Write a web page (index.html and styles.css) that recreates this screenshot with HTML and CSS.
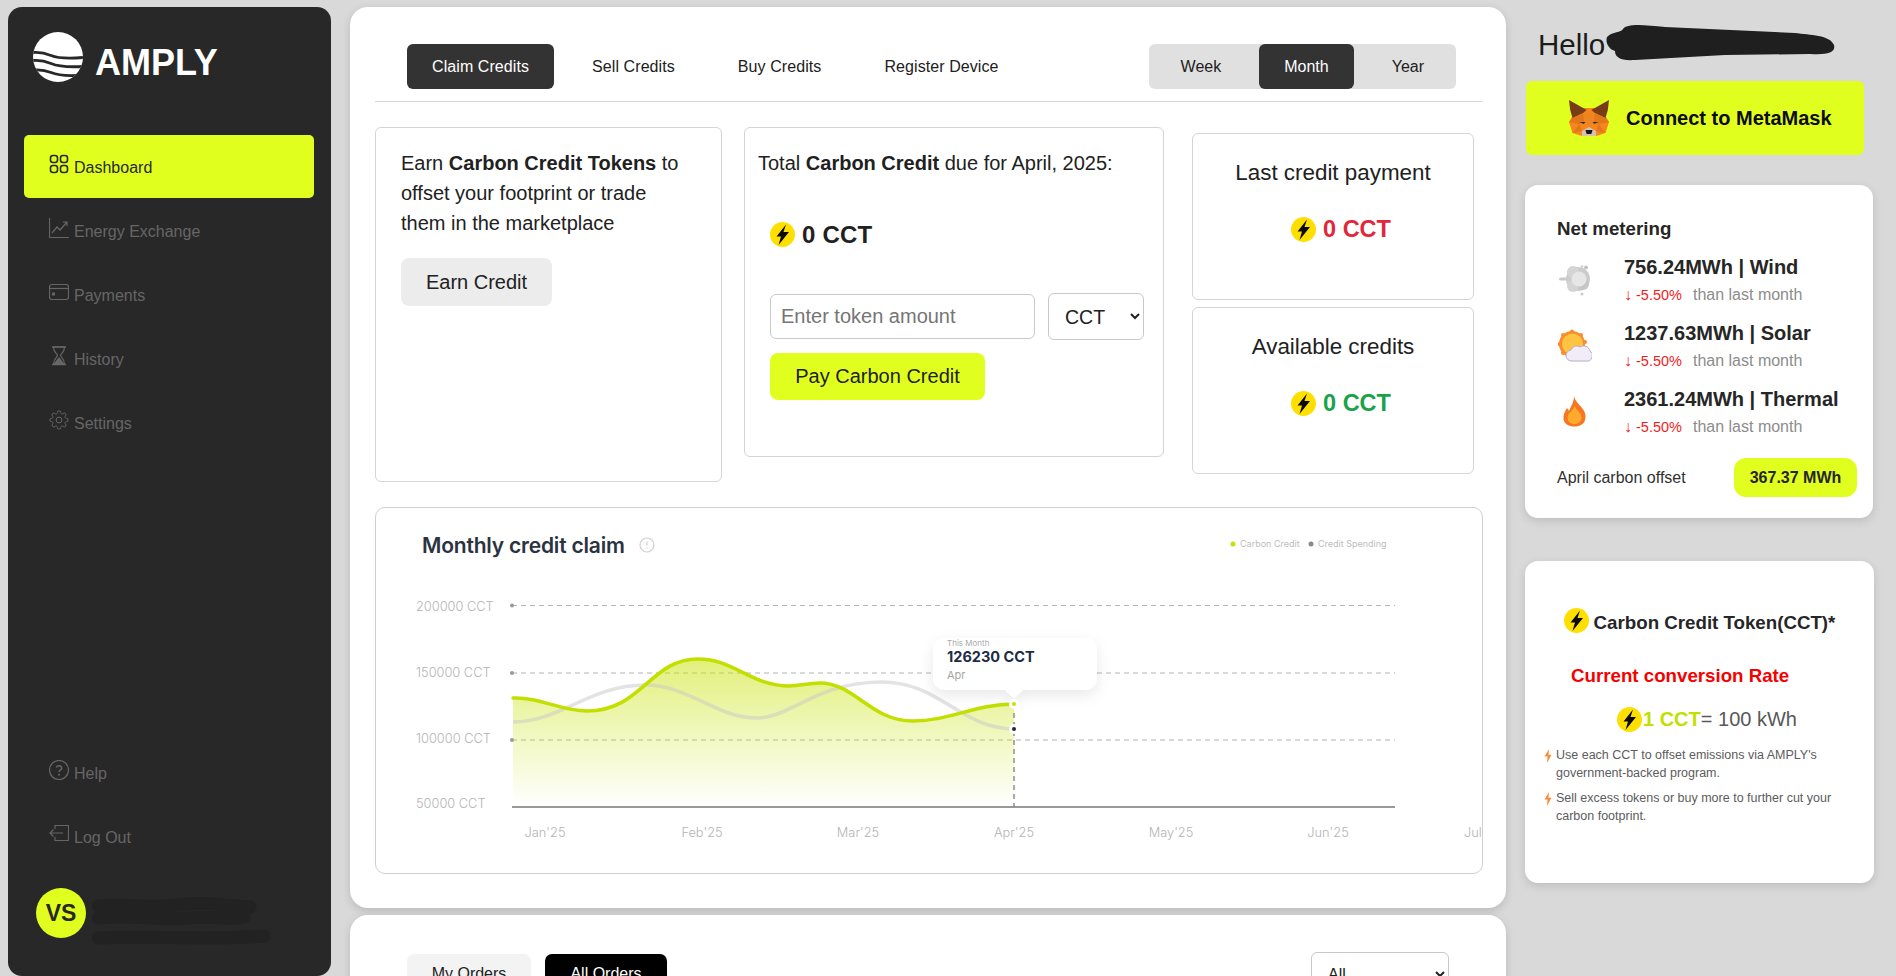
FILE: index.html
```html
<!DOCTYPE html>
<html lang="en">
<head>
<meta charset="utf-8">
<title>AMPLY Dashboard</title>
<link rel="stylesheet" href="styles.css">
</head>
<body>
<svg class="defs" width="0" height="0" aria-hidden="true">
  <symbol id="coin" viewBox="0 0 25 25">
    <circle cx="12.5" cy="12.5" r="12.5" fill="#ffdf00"/>
    <polygon points="16,2.5 6.5,14.5 11,14.5 8.500,23 19,10 13.500,10" fill="#0a0a0a"/>
  </symbol>
  <symbol id="bolt" viewBox="0 0 8 14">
    <polygon points="5,0 0.5,7.5 3.5,7.5 3,14 7.5,5.8 4.5,5.8" fill="#fb8b3c"/>
  </symbol>
</svg>
<div class="page">
  <aside class="sidebar">
    <div class="brand">
      <svg class="brand-logo" viewBox="0 0 50 50">
        <defs><clipPath id="logo-clip"><circle cx="25" cy="25" r="25"/></clipPath></defs>
        <circle cx="25" cy="25" r="25" fill="#fff"/>
        <g clip-path="url(#logo-clip)" fill="none" stroke="#282828" stroke-width="2.8">
          <path d="M0 20.5C6 20 12 21 18 23.5S32 27 50 25.5"/>
          <path d="M0 28.5C6 28 12 29 18 31.5S32 35.5 50 34.5"/>
          <path d="M0 38C6 37.5 12 38 18 40.5S32 44.5 50 43"/>
        </g>
      </svg>
      <span class="brand-name">AMPLY</span>
    </div>
    <nav class="nav">
      <a class="nav-item nav-active">
        <svg class="nav-icon" viewBox="0 0 20 20"><rect x="1.5" y="1.5" width="7" height="7" rx="2.5"/><rect x="11.5" y="1.5" width="7" height="7" rx="2.5"/><rect x="1.5" y="11.5" width="7" height="7" rx="2.5"/><rect x="11.5" y="11.5" width="7" height="7" rx="2.5"/></svg>
        <span class="nav-label">Dashboard</span>
      </a>
      <a class="nav-item">
        <svg class="nav-icon" viewBox="0 0 20 20"><path d="M.5 0V19.5H20"/><path d="M3 15L8 9l3 3 7-8M14 4h4v4"/></svg>
        <span class="nav-label">Energy Exchange</span>
      </a>
      <a class="nav-item">
        <svg class="nav-icon" viewBox="0 0 20 20"><rect x=".5" y="2.5" width="19" height="15" rx="2.5"/><path d="M.5 6.5h19"/><rect x="3" y="10.5" width="3" height="3" fill="#666" stroke="none"/></svg>
        <span class="nav-label">Payments</span>
      </a>
      <a class="nav-item">
        <svg class="nav-icon" viewBox="0 0 20 20"><path d="M3 1h14M3 18.500h14" stroke-width="1.6"/><path d="M4.500 1c0 6 4 6.500 4 8.500s-4 2.500-4 9h11c0-6.500-4-7-4-9s4-2.500 4-8.500z" stroke-width="1.2"/><path d="M4.500 18h11l-5.500-7z" fill="#666" stroke="none"/></svg>
        <span class="nav-label">History</span>
      </a>
      <a class="nav-item">
        <svg class="nav-icon" viewBox="0 0 24 24"><circle cx="12" cy="12" r="3.500"/><path d="M19.400 15a1.650 1.650 0 0 0 .33 1.820l.06.06a2 2 0 0 1 0 2.830 2 2 0 0 1-2.830 0l-.06-.06a1.650 1.650 0 0 0-1.820-.33 1.650 1.650 0 0 0-1 1.510V21a2 2 0 0 1-2 2 2 2 0 0 1-2-2v-.09A1.650 1.650 0 0 0 9 19.400a1.650 1.650 0 0 0-1.820.33l-.06.06a2 2 0 0 1-2.830 0 2 2 0 0 1 0-2.830l.06-.06a1.650 1.650 0 0 0 .33-1.820 1.650 1.650 0 0 0-1.510-1H3a2 2 0 0 1-2-2 2 2 0 0 1 2-2h.09A1.650 1.650 0 0 0 4.600 9a1.650 1.650 0 0 0-.33-1.820l-.06-.06a2 2 0 0 1 0-2.830 2 2 0 0 1 2.830 0l.06.06a1.650 1.650 0 0 0 1.820.33H9a1.650 1.650 0 0 0 1-1.510V3a2 2 0 0 1 2-2 2 2 0 0 1 2 2v.09a1.650 1.650 0 0 0 1 1.510 1.650 1.650 0 0 0 1.820-.33l.06-.06a2 2 0 0 1 2.830 0 2 2 0 0 1 0 2.830l-.06.06a1.650 1.650 0 0 0-.33 1.820V9a1.650 1.650 0 0 0 1.510 1H21a2 2 0 0 1 2 2 2 2 0 0 1-2 2h-.09a1.650 1.650 0 0 0-1.510 1z"/></svg>
        <span class="nav-label">Settings</span>
      </a>
    </nav>
    <nav class="nav nav-bottom">
      <a class="nav-item">
        <svg class="nav-icon" viewBox="0 0 20 20"><circle cx="10" cy="10" r="9.500"/><path d="M7.300 7.500a2.800 2.800 0 0 1 5.400.8c0 1.800-2.700 2-2.700 3.700" stroke-width="1.500"/><circle cx="10" cy="14.800" r="1" fill="#666" stroke="none"/></svg>
        <span class="nav-label">Help</span>
      </a>
      <a class="nav-item">
        <svg class="nav-icon" viewBox="0 0 20 20"><path d="M6 5V1.500h13.500v15H6V13"/><path d="M14 9H1M4.500 5.500L1 9l3.500 3.500"/></svg>
        <span class="nav-label">Log Out</span>
      </a>
    </nav>
    <div class="user">
      <div class="avatar">VS</div>
      <svg class="user-scribble" viewBox="0 0 190 50"><path d="M6 10c30 -3 50 3 80 -1s50 1 72 2M6 22c40 -4 60 3 90 0s35 3 56 -1"/><path d="M6 42c50 -3 110 3 166 -2"/></svg>
    </div>
  </aside>

  <main class="main">
    <section class="panel panel-claim">
      <header class="tabbar">
        <div class="tabs tabs-main">
          <button class="tab tab-active">Claim Credits</button>
          <button class="tab">Sell Credits</button>
          <button class="tab">Buy Credits</button>
          <button class="tab">Register Device</button>
        </div>
        <div class="tabs range">
          <button class="tab">Week</button>
          <button class="tab tab-active">Month</button>
          <button class="tab">Year</button>
        </div>
      </header>

      <div class="cards">
        <div class="box box-earn">
          <p class="lead">Earn <b>Carbon Credit Tokens</b> to offset your footprint or trade them in the marketplace</p>
          <button class="btn btn-grey">Earn Credit</button>
        </div>
        <div class="box box-pay">
          <p class="lead">Total <b>Carbon Credit</b> due for April, 2025:</p>
          <div class="amount amount-pay"><svg class="coin"><use href="#coin"/></svg><span>0 CCT</span></div>
          <div class="pay-form">
            <input class="field" type="text" placeholder="Enter token amount">
            <select class="picker"><option>CCT</option></select>
          </div>
          <button class="btn btn-lime">Pay Carbon Credit</button>
        </div>
        <div class="stack">
          <div class="box box-stat">
            <h4 class="stat-title">Last credit payment</h4>
            <div class="amount amount-stat red"><svg class="coin"><use href="#coin"/></svg><span>0 CCT</span></div>
          </div>
          <div class="box box-stat">
            <h4 class="stat-title">Available credits</h4>
            <div class="amount amount-stat green"><svg class="coin"><use href="#coin"/></svg><span>0 CCT</span></div>
          </div>
        </div>
      </div>

      <div class="chart-card">
        <svg class="chart" viewBox="376 508 1106 365">
          <defs>
            <linearGradient id="area" x1="0" y1="0" x2="0" y2="1">
              <stop offset="0" stop-color="#c6e200" stop-opacity=".52"/>
              <stop offset="1" stop-color="#c6e200" stop-opacity="0"/>
            </linearGradient>
            <filter id="tip-shadow" x="-20%" y="-20%" width="140%" height="160%">
              <feDropShadow dx="0" dy="5" stdDeviation="7" flood-color="#000" flood-opacity=".09"/>
            </filter>
          </defs>
          <text class="c-title" x="422" y="553">Monthly credit claim</text>
          <circle cx="647" cy="545" r="7" class="c-info"/>
          <path d="M647 541.500v4M647 547.500v1" class="c-info-mark"/>

          <circle cx="1233" cy="544" r="2.500" fill="#c6e200"/>
          <text class="c-legend" x="1240" y="547">Carbon Credit</text>
          <circle cx="1311" cy="544" r="2.500" fill="#8a8a8a"/>
          <text class="c-legend" x="1318" y="547">Credit Spending</text>

          <path class="c-grid" d="M512 605.500H1395M512 673H1395M512 740H1395"/>
          <circle cx="512" cy="605.500" r="2" fill="#999"/>
          <circle cx="512" cy="673" r="2" fill="#999"/>
          <circle cx="512" cy="740" r="2" fill="#999"/>

          <text class="c-axis" x="416" y="610.500">200000 CCT</text>
          <text class="c-axis" x="416" y="676.500">150000 CCT</text>
          <text class="c-axis" x="416" y="742.500">100000 CCT</text>
          <text class="c-axis" x="416" y="808">50000 CCT</text>

          <path fill="url(#area)" d="M513 698C540 697 560 711 587 711C642 711 650 659 698 659C735 659 750 686 790 686C800 686 808 683 820 683C855 683 870 721 913 721C950 721 975 704 1014 704L1014 807L513 807Z"/>
          <path class="c-line-grey" d="M513 722C560 722 590 685 645 685C690 685 715 718 757 718C790 718 815 683 880 682C940 681 960 729 1014 729"/>
          <path class="c-line-lime" d="M513 698C540 697 560 711 587 711C642 711 650 659 698 659C735 659 750 686 790 686C800 686 808 683 820 683C855 683 870 721 913 721C950 721 975 704 1014 704"/>
          <path class="c-drop" d="M1014 704V807"/>
          <path class="c-base" d="M512 807H1395"/>

          <text class="c-axis c-mid" x="545" y="837">Jan'25</text>
          <text class="c-axis c-mid" x="702" y="837">Feb'25</text>
          <text class="c-axis c-mid" x="858" y="837">Mar'25</text>
          <text class="c-axis c-mid" x="1014" y="837">Apr'25</text>
          <text class="c-axis c-mid" x="1171" y="837">May'25</text>
          <text class="c-axis c-mid" x="1328" y="837">Jun'25</text>
          <text class="c-axis" x="1464" y="837">Jul'25</text>

          <path filter="url(#tip-shadow)" fill="#fff" d="M945 638H1085a12 12 0 0 1 12 12V678a12 12 0 0 1-12 12H1023L1014 698L1005 690H945a12 12 0 0 1-12-12V650a12 12 0 0 1 12-12z"/>
          <text class="c-tip-small" x="947" y="646">This Month</text>
          <text class="c-tip-value" x="947" y="662">126230 CCT</text>
          <text class="c-tip-sub" x="947" y="679">Apr</text>

          <circle cx="1014" cy="704" r="5" fill="#fff"/>
          <circle cx="1014" cy="704" r="2" fill="#c6e200"/>
          <circle cx="1014" cy="729" r="5" fill="#fff"/>
          <circle cx="1014" cy="729" r="2" fill="#1f2937"/>
        </svg>
      </div>
    </section>

    <section class="panel panel-orders">
      <div class="orders-bar">
        <div class="order-tabs">
          <button class="order-tab">My Orders</button>
          <button class="order-tab order-tab-active">All Orders</button>
        </div>
        <select class="picker orders-picker"><option>All</option></select>
      </div>
    </section>
  </main>

  <aside class="rail">
    <div class="hello">
      <span>Hello</span>
      <svg class="hello-scribble" viewBox="0 0 230 40"><path d="M2 14C8 8 16 10 18 6C22 0 40 2 60 4L190 10C205 12 225 12 229 22C231 30 222 32 205 31L120 32L30 37C15 38 10 34 10 28C4 26 0 20 2 14Z"/></svg>
    </div>
    <button class="connect">
      <svg class="fox" viewBox="0 0 34 37" preserveAspectRatio="none">
        <polygon points="3,16 11,8 23,8 31,16 34,22 31,33 23,36 11,36 3,33 0,22" fill="#f6851b"/>
        <polygon points="0,0 15,10 12,13 3,18 1,10" fill="#763d16"/>
        <polygon points="34,0 19,10 22,13 31,18 33,10" fill="#763d16"/>
        <polygon points="3,18 12,13 13,22 9,24 0,22" fill="#e2761b"/>
        <polygon points="31,18 22,13 21,22 25,24 34,22" fill="#e2761b"/>
        <polygon points="12,13 22,13 20,22 17,27 14,22" fill="#ee8520"/>
        <polygon points="9,22 14,22 12.500,24" fill="#233447"/>
        <polygon points="25,22 20,22 21.500,24" fill="#233447"/>
        <polygon points="3,33 9,24 11,31" fill="#e4761b"/>
        <polygon points="31,33 25,24 23,31" fill="#e4761b"/>
        <polygon points="11,31 17,27 23,31 23,36 11,36" fill="#d7c1b3"/>
        <polygon points="14,30 20,30 19,34 15,34" fill="#161616"/>
      </svg>
      <span>Connect to MetaMask</span>
    </button>

    <section class="side-card net">
      <h3 class="net-title">Net metering</h3>
      <div class="meter">
        <svg class="meter-icon" viewBox="0 0 34 34">
          <rect x="1" y="14.500" width="12" height="3" rx="1.500" fill="#c9c9c9"/>
          <circle cx="20" cy="16" r="12" fill="#cccccc"/>
          <circle cx="15" cy="9" r="6" fill="#d4d4d4"/>
          <circle cx="15" cy="23" r="6" fill="#d4d4d4"/>
          <circle cx="25" cy="21" r="6" fill="#c6c6c6"/>
          <circle cx="21" cy="16" r="7.500" fill="#e6e6e6"/>
          <circle cx="24" cy="3.500" r="1.500" fill="#d6d6d6"/>
          <circle cx="28" cy="4.500" r="2" fill="#c2c2c2"/>
          <circle cx="24" cy="31" r="1.500" fill="#c9c9c9"/>
        </svg>
        <div class="meter-text">
          <div class="meter-value">756.24MWh | Wind</div>
          <div class="meter-sub"><span class="delta"><span class="arrow">↓</span>-5.50%</span><span class="than">than last month</span></div>
        </div>
      </div>
      <div class="meter">
        <svg class="meter-icon" viewBox="0 0 34 34">
          <circle cx="14" cy="15" r="13" fill="#fb8b2b"/>
          <circle cx="14" cy="2.500" r="2" fill="#fb8b2b"/><circle cx="23" cy="6" r="2" fill="#fb8b2b"/><circle cx="5" cy="6" r="2" fill="#fb8b2b"/><circle cx="1.500" cy="15" r="2" fill="#fb8b2b"/><circle cx="5" cy="24" r="2" fill="#fb8b2b"/><circle cx="27" cy="13" r="2" fill="#fb8b2b"/>
          <circle cx="14.500" cy="15" r="10.500" fill="#fcc440"/>
          <path d="M14 32h14a5.500 5.500 0 0 0 4-10 6.500 6.500 0 0 0-10-4 6 6 0 0 0-9 3 5.500 5.500 0 0 0 1 11z" fill="#f1ecf8" stroke="#b5aec9"/>
        </svg>
        <div class="meter-text">
          <div class="meter-value">1237.63MWh | Solar</div>
          <div class="meter-sub"><span class="delta"><span class="arrow">↓</span>-5.50%</span><span class="than">than last month</span></div>
        </div>
      </div>
      <div class="meter">
        <svg class="meter-icon" viewBox="0 0 34 34">
          <path d="M16 1C17 6 21 9 24 13C28 18 28 22 27 25C26 29 22 31.500 16.500 31.500C11 31.500 6 29 5.500 24C5 20 7 16 9 13C10 14 10.500 15 11 16C13 11 16 7 16 1Z" fill="#f7761f"/>
          <path d="M16.500 11c1 3 4 5 6 8 2 4 1 10-6 10s-8-6-6-10c1.500-2 5-4 6-8z" fill="#fdab2f"/>
        </svg>
        <div class="meter-text">
          <div class="meter-value">2361.24MWh | Thermal</div>
          <div class="meter-sub"><span class="delta"><span class="arrow">↓</span>-5.50%</span><span class="than">than last month</span></div>
        </div>
      </div>
      <div class="offset">
        <span>April carbon offset</span>
        <span class="offset-pill">367.37 MWh</span>
      </div>
    </section>

    <section class="side-card token">
      <div class="token-title"><svg class="coin"><use href="#coin"/></svg><span>Carbon Credit Token(CCT)*</span></div>
      <div class="token-rate-label">Current conversion Rate</div>
      <div class="token-rate"><svg class="coin"><use href="#coin"/></svg><b>1 CCT</b><span>= 100 kWh</span></div>
      <ul class="token-list">
        <li class="token-item"><svg class="bullet"><use href="#bolt"/></svg><span>Use each CCT to offset emissions via AMPLY's government-backed program.</span></li>
        <li class="token-item"><svg class="bullet"><use href="#bolt"/></svg><span>Sell excess tokens or buy more to further cut your carbon footprint.</span></li>
      </ul>
    </section>
  </aside>
</div>
</body>
</html>
```

FILE: styles.css
```css
* { box-sizing: border-box; }
html, body { margin: 0; height: 976px; overflow: hidden; }
body {
  background: #d9d9d9;
  font-family: "Liberation Sans", Arial, sans-serif;
  color: #212121;
}
button, input, select { font-family: inherit; }
.defs { position: absolute; }

.page { display: flex; align-items: flex-start; padding: 7px 0 0 8px; height: 976px; overflow: hidden; }

/* Sidebar */
.sidebar {
  width: 323px; height: 969px; flex: none;
  background: #282828; border-radius: 14px;
  display: flex; flex-direction: column;
  padding: 25px 17px 38px 16px;
}
.brand { display: flex; align-items: flex-start; padding-left: 9px; height: 103px; }
.brand-logo { width: 50px; height: 50px; flex: none; }
.brand-name { color: #fff; font-size: 36px; font-weight: 700; line-height: 42px; margin: 10px 0 0 12px; }
.nav { display: flex; flex-direction: column; gap: 1px; }
.nav-bottom { margin-top: auto; margin-bottom: 20px; }
.nav-item {
  display: flex; align-items: flex-start; gap: 5px;
  height: 63px; padding: 19px 0 0 25px;
  border-radius: 5px; color: #666; font-size: 16px;
}
.nav-active { background: #e1ff1f; color: #282828; }
.nav-icon { width: 20px; height: 20px; flex: none; fill: none; stroke: #666; stroke-width: 1.2; }
.nav-active .nav-icon { stroke: #282828; stroke-width: 1.6; }
.nav-label { margin-top: 5px; line-height: 18px; }
.user { position: relative; display: flex; padding-left: 12px; }
.avatar {
  width: 50px; height: 50px; border-radius: 50%;
  background: #e1ff1f; color: #282828;
  font-size: 23px; font-weight: 700; text-align: center; line-height: 50px;
}
.user-scribble {
  position: absolute; left: 68px; top: 8px; width: 190px; height: 50px;
  fill: none; stroke: #222; stroke-width: 13; stroke-linecap: round; stroke-linejoin: round;
}

/* Main */
.main { width: 1156px; flex: none; margin-left: 19px; display: flex; flex-direction: column; gap: 7px; }
.panel { background: #fff; border-radius: 18px; box-shadow: 0 3px 10px rgba(0,0,0,.14); }
.panel-claim { height: 901px; padding: 37px 24px 0 25px; }
.tabbar {
  display: flex; justify-content: space-between;
  padding: 0 26px 12px 32px; border-bottom: 1px solid #d6d6d6;
}
.tabs { display: flex; gap: 13px; }
.tabs-main .tab { letter-spacing: .08px; }
.range { background: #e0e0e0; border-radius: 6px; padding: 0 7px; }
.tab {
  height: 45px; padding: 0 25px; border: 0; border-radius: 6px;
  background: transparent; color: #212121; font-size: 16px;
}
.tab-active { background: #333; color: #fff; }

.cards { display: flex; align-items: flex-start; margin-top: 25px; }
.box { border: 1px solid #d4d4d4; border-radius: 6px; background: #fff; }
.box-earn { width: 347px; height: 355px; padding: 20px 25px; }
.box-pay { width: 420px; height: 330px; margin-left: 22px; padding: 20px 13px; }
.lead { margin: 0; font-size: 20px; line-height: 30px; color: #212121; }
.btn { border: 0; border-radius: 8px; height: 48px; font-size: 20px; color: #212121; }
.btn-grey { display: block; width: 151px; margin-top: 20px; background: #ececec; }
.btn-lime { display: block; width: 215px; height: 47px; margin: 13px 0 0 12px; background: #e1ff1f; }
.amount { display: flex; align-items: center; gap: 7px; height: 25px; font-size: 24px; font-weight: 700; letter-spacing: .2px; }
.amount-pay { margin: 44px 0 0 12px; }
.coin { width: 25px; height: 25px; flex: none; display: block; }
.pay-form { display: flex; align-items: center; gap: 13px; margin: 46px 0 0 12px; height: 47px; }
.field {
  width: 265px; height: 45px; padding: 0 10px;
  border: 1px solid #c9c9c9; border-radius: 6px;
  font-size: 20px; background: #fff; color: #212121;
}
.field::placeholder { color: #757575; }
.picker {
  width: 96px; height: 47px; padding: 0 12px;
  border: 1px solid #c9c9c9; border-radius: 6px;
  background: #fff; color: #212121; font-size: 19.5px;
}
.stack { width: 282px; margin: 6px 0 0 28px; display: flex; flex-direction: column; gap: 7px; }
.box-stat { height: 167px; padding-top: 26px; text-align: center; }
.stat-title { margin: 0; font-size: 22.4px; font-weight: 400; line-height: 26px; }
.amount-stat { justify-content: center; margin-top: 31px; padding-left: 16px; font-size: 23.5px; letter-spacing: 0; }
.red { color: #e2263c; }
.green { color: #18a34a; }

.chart-card {
  margin-top: 25px; width: 1108px; height: 367px;
  border: 1px solid #cfcfcf; border-radius: 10px; overflow: hidden;
}
.chart { display: block; width: 1106px; height: 365px; }
.chart text { font-family: Inter, "Liberation Sans", sans-serif; }
.chart .c-title { font-size: 21px; font-weight: 600; fill: #2b3240; letter-spacing: -.2px; }
.c-info { fill: none; stroke: #cfcfcf; stroke-width: 1.2; }
.c-info-mark { fill: none; stroke: #cfcfcf; stroke-width: 1.2; }
.chart .c-legend { font-size: 9px; fill: #bdbdbd; }
.chart .c-axis { font-size: 12.8px; fill: #b4b4b4; font-weight: 300; }
.c-mid { text-anchor: middle; }
.c-grid { fill: none; stroke: #b3b3b3; stroke-width: 1.2; stroke-dasharray: 5 4; }
.c-line-grey { fill: none; stroke: #c8c8c8; stroke-opacity: .5; stroke-width: 3.5; }
.c-line-lime { fill: none; stroke: #c2df00; stroke-width: 3.5; stroke-linecap: round; }
.c-drop { fill: none; stroke: #888; stroke-width: 1.4; stroke-dasharray: 5 4; }
.c-base { fill: none; stroke: #777; stroke-width: 1.6; }
.chart .c-tip-small { font-size: 8px; fill: #aaa; }
.chart .c-tip-value { font-size: 14.5px; font-weight: 700; fill: #1d2b45; }
.chart .c-tip-sub { font-size: 11px; fill: #a5a5a5; }

.panel-orders { height: 300px; padding: 39px 57px 0; }
.orders-bar { display: flex; justify-content: space-between; align-items: flex-start; }
.order-tabs { display: flex; gap: 14px; }
.order-tab {
  height: 40px; width: 124px; border: 0; border-radius: 7px;
  background: #f3f3f3; color: #212121; font-size: 16px;
}
.order-tab-active { width: 122px; background: #000; color: #fff; }
.orders-picker { width: 138px; height: 45px; margin-top: -2px; padding-left: 12px; font-size: 16px; }

/* Right rail */
.rail { width: 349px; flex: none; margin-left: 19px; display: flex; flex-direction: column; }
.hello { position: relative; margin: 21px 0 0 13px; font-size: 29.5px; line-height: 34px; color: #1c1c1c; }
.hello-scribble {
  position: absolute; left: 67px; top: -5px; width: 230px; height: 40px;
  fill: #1f1f1f;
}
.connect {
  display: flex; align-items: center; gap: 17px;
  width: 338px; height: 74px; margin: 19px 0 0 1px; padding: 0 0 0 43px;
  border: 0; border-radius: 6px; background: #e1ff1f;
  font-size: 20px; font-weight: 700; color: #0c0c0c;
}
.fox { width: 40px; height: 37px; flex: none; }
.side-card { background: #fff; border-radius: 13px; box-shadow: 0 3px 10px rgba(0,0,0,.13); }
.net { height: 333px; margin-top: 30px; padding: 33px 16px 0 32px; width: 348px; }
.net-title { margin: 0 0 15px; font-size: 18.72px; font-weight: 700; line-height: 22px; color: #262626; }
.meter { display: flex; height: 52px; margin-bottom: 14px; }
.meter-icon { width: 34px; height: 34px; margin: 8px 32px 0 1px; flex: none; }
.meter-value { font-size: 20px; font-weight: 700; line-height: 24px; color: #262626; }
.meter-sub { display: flex; gap: 11px; font-size: 16px; line-height: 24px; margin-top: 4px; }
.delta { color: #f31b1b; font-size: 14.5px; }
.arrow { display: inline-block; width: 12px; font-size: 16px; }
.than { color: #8c8c8c; }
.offset { display: flex; justify-content: space-between; align-items: center; margin-top: 19px; font-size: 16px; color: #303030; }
.offset-pill {
  width: 123px; height: 39px; border-radius: 12px; background: #e1ff1f;
  font-weight: 700; text-align: center; line-height: 39px; color: #262626;
}
.token { height: 322px; margin-top: 43px; padding-top: 47px; }
.token-title { display: flex; justify-content: center; gap: 5px; font-size: 18.72px; font-weight: 700; line-height: 30px; color: #262626; }
.token-rate-label { margin: 26px 0 0 46px; font-size: 18.72px; font-weight: 700; line-height: 24px; color: #f70000; }
.token-rate { display: flex; align-items: center; margin: 19px 0 0 92px; font-size: 20px; line-height: 25px; color: #585858; }
.token-rate b { margin-left: 1px; color: #c2df00; }
.token-list { list-style: none; margin: 14px 0 0; padding: 0 30px 0 19px; }
.token-item { display: flex; gap: 4px; font-size: 12.5px; line-height: 18px; color: #5c5c5c; margin-bottom: 7px; }
.bullet { width: 8px; height: 14px; flex: none; margin-top: 3px; }
```
